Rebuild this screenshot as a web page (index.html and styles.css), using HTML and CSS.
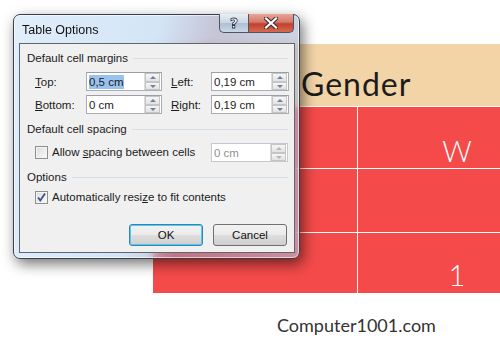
FILE: index.html
```html
<html>
    <head>
        <meta name="viewport" content="width=device-width, initial-scale=1">
        <link rel="stylesheet" href="styles.css">
    </head>
    <body>
        <div class="sheet">
            <div class="head"><span>Gender</span></div>
            <div class="row"><div class="c1"></div><div class="c2">W</div></div>
            <div class="row r2"><div class="c1"></div><div class="c2"></div></div>
            <div class="row r3"><div class="c1"></div><div class="c2">1</div></div>
        </div>
        <div class="brand">Computer1001.com</div>

        <div class="dialog">
            <div class="titlebar">
                <span class="title">Table Options</span>
                <div class="caps">
                    <div class="cap help"><span>?</span></div>
                    <div class="cap close">
                        <svg width="14" height="12" viewBox="0 0 14 12"><path d="M2 1.5 L12 10.5 M12 1.5 L2 10.5" stroke="#3b2a2a" stroke-width="4.2" stroke-linecap="square"/><path d="M2 1.5 L12 10.5 M12 1.5 L2 10.5" stroke="#fff" stroke-width="2.2" stroke-linecap="square"/></svg>
                    </div>
                </div>
            </div>
            <div class="client">
                <div class="group">Default cell margins</div>
                <div class="grid">
                    <label><u>T</u>op:</label>
                    <div class="spin"><span class="val"><span class="sel">0,5 cm</span></span><div class="arrows"><i class="up"></i><i class="dn"></i></div></div>
                    <label><u>L</u>eft:</label>
                    <div class="spin"><span class="val">0,19 cm</span><div class="arrows"><i class="up"></i><i class="dn"></i></div></div>
                    <label><u>B</u>ottom:</label>
                    <div class="spin"><span class="val">0 cm</span><div class="arrows"><i class="up"></i><i class="dn"></i></div></div>
                    <label><u>R</u>ight:</label>
                    <div class="spin"><span class="val">0,19 cm</span><div class="arrows"><i class="up"></i><i class="dn"></i></div></div>
                </div>
                <div class="group g2">Default cell spacing</div>
                <div class="checkrow">
                    <span class="box"></span>
                    <span class="lbl">Allow <u>s</u>pacing between cells</span>
                    <div class="spin off"><span class="val">0 cm</span><div class="arrows"><i class="up"></i><i class="dn"></i></div></div>
                </div>
                <div class="group g3">Options</div>
                <div class="checkrow c2row">
                    <span class="box on"><svg width="11" height="11" viewBox="0 0 11 11"><path d="M2 5.5 L4.3 8.5 L9 1.5" fill="none" stroke="#3c4f8f" stroke-width="1.8"/></svg></span>
                    <span class="lbl">Automatically resi<u>z</u>e to fit contents</span>
                </div>
                <div class="buttons">
                    <button class="btn ok">OK</button>
                    <button class="btn">Cancel</button>
                </div>
            </div>
        </div>
    </body>
</html>
```

FILE: styles.css
```css
body{
    margin: 0; width: 500px; height: 344px; overflow: hidden;
    background: #fff; font-family: "Lato", "Liberation Sans", sans-serif;
    position: relative;
}
.sheet{
    margin: 44px 0 0 153px; width: 347px;
}
.head{
    height: 62px; background: #f2d4a7;
    padding-left: 148px; box-sizing: border-box;
    font-size: 32px; letter-spacing: 1px;
    color: #1c1c1c; line-height: 62px; padding-top: 9px;
}
.row{
    display: flex; height: 62px; border-top: 1px solid #fff;
    background: #f44a4a; box-sizing: border-box;
}
.r2{ height: 64px; }
.r3{ height: 61px; }
.c1{ width: 205px; border-right: 1px solid #fff; box-sizing: border-box; }
.c2{
    flex: 1; padding-left: 56px; text-align: center; color: #fff;
    font-size: 29px; padding-top: 26px; font-weight: 300;
}
.r3 .c2{ padding-top: 24px; }
.brand{
    margin-top: 21px; padding-left: 277px;
    font-size: 18px; color: #333; line-height: 22px;
}

.dialog{
    position: absolute; left: 13px; top: 14px;
    width: 287px; height: 245px; box-sizing: border-box;
    border: 1px solid #3a3f48; border-radius: 7px;
    background: linear-gradient(100deg, rgba(222,236,250,.92) 0%, rgba(200,222,244,.8) 45%, rgba(150,150,180,.55) 62%, rgba(175,190,215,.6) 100%);
    backdrop-filter: blur(4px);
    box-shadow: 3px 5px 14px rgba(0,0,0,.55), inset 0 0 0 1px rgba(255,255,255,.6);
    padding: 28px 4px 5px 5px;
    font-family: "Liberation Sans", sans-serif; font-size: 11.5px; color: #1b1b1b;
}
.titlebar{
    position: absolute; left: 0; top: 0; right: 0; height: 28px;
}
.title{
    position: absolute; left: 8px; top: 8px;
    font-size: 12.5px; color: #111;
}
.caps{
    position: absolute; right: 5px; top: -1px; display: flex;
}
.cap{
    height: 19px; box-sizing: border-box; border: 1px solid #4b5566; border-top: none;
    display: flex; align-items: center; justify-content: center;
}
.help{
    width: 29px; border-radius: 0 0 0 5px; border-right: none;
    background: linear-gradient(#e8eef5, #c9d5e3 50%, #aebfd3 51%, #c9d8e8);
}
.help span{
    font: bold 14px "DejaVu Sans", sans-serif; color: #fff;
    -webkit-text-stroke: 0.8px #2c3442; margin-top: -1px;
}
.close{
    width: 46px; border-radius: 0 0 5px 0;
    background: linear-gradient(#e8a597, #d4796a 45%, #c2402f 55%, #d66a4f);
}
.client{
    height: 100%; box-sizing: border-box;
    border: 1px solid #5f6670; background: #f0f0f0;
    padding: 7px 6px 0 7px;
}
.group{
    display: flex; align-items: center; gap: 5px; height: 14px;
}
.group::after{
    content: ""; flex: 1; height: 1px; background: #d5dfe5;
}
.g2{ margin-top: 8px; }
.g3{ margin-top: 8px; }
.grid{
    display: grid; grid-template-columns: 51px 76px 49px 78px;
    row-gap: 4px; margin: 7px 0 0 8px; align-items: center;
}
.grid label:nth-child(3), .grid label:nth-child(7){ margin-left: 9px; }
.spin{
    height: 19px; box-sizing: border-box; background: #fff;
    border: 1px solid #abadb3; border-top-color: #9a9ea8;
    display: flex; align-items: center; justify-content: space-between;
}
.val{ padding-left: 2px; }
.sel{ background: #99c3ee; padding: 1px 0; }
.arrows{
    width: 16px; height: 17px; display: flex; flex-direction: column;
    border-left: 1px solid #dcdcdc;
}
.arrows i{
    flex: 1; position: relative; margin: 0 1px 0 0;
    background: linear-gradient(#f6f6f6, #e2e2e2); border: 1px solid #c5c5c5;
}
.arrows i::after{
    content: ""; position: absolute; left: 4px; top: 2px;
    border-left: 3px solid transparent; border-right: 3px solid transparent;
}
.up::after{ border-bottom: 3px solid #6d7fa3; }
.dn::after{ border-top: 3px solid #6d7fa3; }
.off{ border-color: #c7c9ce; width: 77px; margin-left: auto; color: #8f8f8f; }
.off .arrows i::after{ border-bottom-color: #b5b5b5; border-top-color: #b5b5b5; }
.checkrow{
    display: flex; align-items: center; margin: 7px 0 0 8px; height: 19px;
}
.box{
    width: 13px; height: 13px; box-sizing: border-box;
    border: 1px solid #8e8f8f; background: linear-gradient(135deg, #dcdcdc, #fafafa);
    box-shadow: inset 0 0 0 1px #f4f4f4; margin-right: 4px;
    display: flex; align-items: center; justify-content: center;
}
.checkrow .lbl{ padding-bottom: 1px; }
.c2row{ margin-top: 4px; }
.buttons{
    display: flex; justify-content: flex-end; gap: 10px; margin: 17px 1px 0 0;
}
.btn{
    width: 74px; height: 22px; border-radius: 3px;
    border: 1px solid #707070;
    background: linear-gradient(#f2f2f2, #ebebeb 50%, #dddddd 51%, #cfcfcf);
    font: 11.5px "Liberation Sans", sans-serif; color: #111; padding: 0;
}
.ok{
    border-color: #3c7fb1;
    box-shadow: inset 0 0 0 1px #48d0f4;
}
```
